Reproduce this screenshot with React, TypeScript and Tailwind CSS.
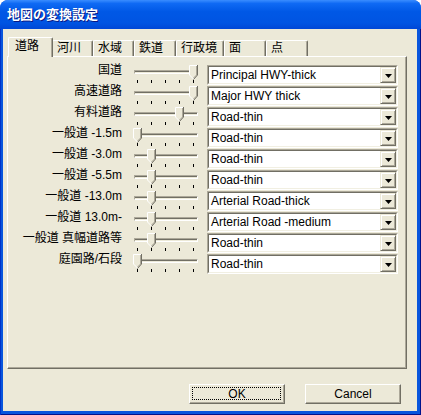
import React from "react";

const rows: [string, number, string][] = [
  ["国道", 4, "Principal HWY-thick"],
  ["高速道路", 4, "Major HWY thick"],
  ["有料道路", 3, "Road-thin"],
  ["一般道 -1.5m", 0, "Road-thin"],
  ["一般道 -3.0m", 1, "Road-thin"],
  ["一般道 -5.5m", 1, "Road-thin"],
  ["一般道 -13.0m", 1, "Arterial Road-thick"],
  ["一般道 13.0m-", 1, "Arterial Road -medium"],
  ["一般道 真幅道路等", 1, "Road-thin"],
  ["庭園路/石段", 0, "Road-thin"],
];

const thumbPos = ["left-[1px]", "left-[15px]", "left-[29px]", "left-[43px]", "left-[57px]"];

const tabs: { label: string; w: string }[] = [
  { label: "河川", w: "w-[41px]" },
  { label: "水域", w: "w-[41px]" },
  { label: "鉄道", w: "w-[42px]" },
  { label: "行政境", w: "w-[48px]" },
  { label: "面", w: "w-[42px]" },
  { label: "点", w: "w-[42px]" },
];

const jp = "font-['Liberation_Sans','Noto_Sans_CJK_JP',sans-serif]";
const lat = "font-['Liberation_Sans',Arial,sans-serif]";

function Thumb() {
  return (
    <svg width="9" height="15" viewBox="0 0 9 15" className="block">
      <polygon points="0,0 9,0 9,10 4.5,14.5 0,10" fill="#ECE9D8" />
      <path d="M0.5 10 V0.5 H8" stroke="#ffffff" strokeWidth="1" fill="none" />
      <path d="M0.5 10 L4.5 14" stroke="#ffffff" strokeWidth="1" fill="none" />
      <path d="M7.5 1 V10 L4.5 13" stroke="#ACA899" strokeWidth="1" fill="none" />
      <path d="M8.5 0 V10 L4.5 14.5" stroke="#716F64" strokeWidth="1" fill="none" />
    </svg>
  );
}

function Slider({ v }: { v: number }) {
  return (
    <div className="relative w-[66px] h-[21px] shrink-0">
      <div className="absolute left-[2px] top-[5px] w-[64px] h-[4px] border border-t-[#ACA899] border-l-[#ACA899] border-b-white border-r-white">
        <div className="h-[2px] border-t border-t-[#716F64] bg-[#ECE9D8]" />
      </div>
      <div className="absolute left-[5px] top-[15px] w-[57px] flex justify-between">
        {[0, 1, 2, 3, 4].map((i) => (
          <div key={i} className="w-[1px] h-[3px] bg-black" />
        ))}
      </div>
      <div className={"absolute top-0 " + thumbPos[v]}>
        <Thumb />
      </div>
    </div>
  );
}

function Combo({ text }: { text: string }) {
  return (
    <div className="flex h-[20px] w-[191px] shrink-0 border border-t-[#ACA899] border-l-[#ACA899] border-b-white border-r-white">
      <div className="flex flex-1 items-center bg-white border border-t-[#716F64] border-l-[#716F64] border-b-[#F1EFE2] border-r-[#F1EFE2]">
        <span className={"flex-1 pl-[2px] text-[12px] leading-[16px] text-black whitespace-nowrap " + lat}>{text}</span>
        <div className="flex h-[16px] w-[16px] items-center justify-center bg-[#ECE9D8] border border-t-[#ECE9D8] border-l-[#ECE9D8] border-b-[#716F64] border-r-[#716F64] shadow-[inset_1px_1px_0_#ffffff,inset_-1px_-1px_0_#ACA899]">
          <svg width="7" height="4" viewBox="0 0 7 4" className="block mt-[1px]">
            <polygon points="0,0 7,0 3.5,4" fill="#000" />
          </svg>
        </div>
      </div>
    </div>
  );
}

function Button({ label, focus }: { label: string; focus?: boolean }) {
  return (
    <div className="relative flex h-[20px] w-[96px] items-center justify-center bg-[#ECE9D8] border border-t-white border-l-white border-b-[#716F64] border-r-[#716F64] shadow-[inset_-1px_-1px_0_#ACA899]">
      {focus && <div className="absolute left-[2px] top-[2px] right-[3px] bottom-[3px] border border-dotted border-black" />}
      <span className={"text-[12px] leading-[14px] text-black " + lat}>{label}</span>
    </div>
  );
}

export default function App() {
  return (
    <div className="w-[421px] h-[415px] bg-white">
      <div className="flex flex-col w-[421px] h-[415px] rounded-t-[8px] overflow-hidden bg-[#0855dd]">
        <div className="flex h-[29px] items-center pl-[7px] bg-[linear-gradient(180deg,#3a8dff_0%,#0f6af4_12%,#0058e6_40%,#0054e2_80%,#0047d6_100%)]">
          <span className={"text-[13px] font-bold text-white leading-[16px] [text-shadow:1px_1px_0_#0a1883] " + jp}>
            地図の変換設定
          </span>
        </div>
        <div className="flex flex-1 pl-[3px] pr-[4px] pb-[4px] shadow-[inset_1px_0_0_#0033c8,inset_-1px_-1px_0_#00138c]">
          <div className="flex flex-col w-[414px] h-[382px] bg-[#ECE9D8] pt-[8px] pl-[4px]">
            {/* tab strip */}
            <div className="flex items-end h-[19px] pl-[3px]">
              <div className="relative z-10 -ml-[2px] -mr-[1px] -mb-[1px] w-[45px] h-[20px] bg-[#ECE9D8] border-l border-t border-r border-l-white border-t-white border-r-[#716F64] rounded-t-[2px] shadow-[inset_-1px_0_0_#ACA899] pl-[6px] pt-[2px]">
                <span className={"block text-[12px] leading-[12px] text-black " + jp}>道路</span>
              </div>
              {tabs.map((t) => (
                <div
                  key={t.label}
                  className={
                    "h-[16px] bg-[#ECE9D8] border-l border-t border-r border-l-white border-t-white border-r-[#716F64] rounded-t-[2px] shadow-[inset_-1px_0_0_#ACA899] pl-[4px] pt-[1px] " +
                    t.w
                  }
                >
                  <span className={"block text-[12px] leading-[12px] text-black whitespace-nowrap " + jp}>{t.label}</span>
                </div>
              ))}
            </div>
            {/* panel */}
            <div className="flex flex-col w-[400px] h-[313px] border border-l-white border-t-white border-r-[#716F64] border-b-[#716F64] shadow-[inset_-1px_-1px_0_#ACA899] pt-[8px]">
              {rows.map(([label, v, text], i) => (
                <div key={i} className="flex items-start h-[21px]">
                  <div className={"w-[114px] shrink-0 text-right text-[12px] leading-[12px] -mt-[1px] text-black whitespace-nowrap " + jp}>
                    {label}
                  </div>
                  <div className="ml-[10px]">
                    <Slider v={v} />
                  </div>
                  <div className="ml-[9px]">
                    <Combo text={text} />
                  </div>
                </div>
              ))}
            </div>
            {/* buttons */}
            <div className="flex justify-end gap-[20px] pr-[16px] mt-[15px]">
              <Button label="OK" focus />
              <Button label="Cancel" />
            </div>
          </div>
        </div>
      </div>
    </div>
  );
}
